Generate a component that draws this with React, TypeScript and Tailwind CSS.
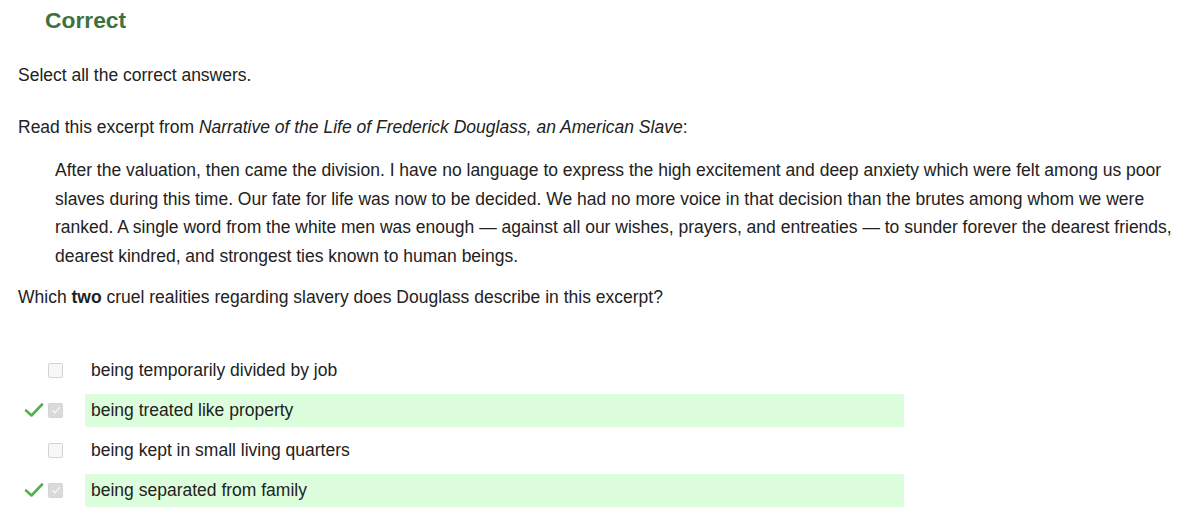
import React from "react";

function Check() {
  return (
    <svg width="20" height="16" viewBox="0 0 20 16" className="block">
      <path d="M2 8.5 L7.5 13.5 L18 2.5" fill="none" stroke="#52b152" strokeWidth="2.6" strokeLinecap="round" strokeLinejoin="round" />
    </svg>
  );
}

function Box({ checked }: { checked: boolean }) {
  return (
    <div className={`w-[15px] h-[15px] rounded-[2px] border border-[#d4d4d4] flex items-center justify-center ${checked ? "bg-[#dadada]" : "bg-[#f7f7f7]"}`}>
      {checked && (
        <svg width="12" height="12" viewBox="0 0 12 12">
          <path d="M2.5 6.2 L5 8.7 L9.8 3.2" fill="none" stroke="#f4f4f4" strokeWidth="1.6" />
        </svg>
      )}
    </div>
  );
}

const options = [
  { text: "being temporarily divided by job", correct: false },
  { text: "being treated like property", correct: true },
  { text: "being kept in small living quarters", correct: false },
  { text: "being separated from family", correct: true },
];

export default function App() {
  return (
    <div className="w-[1182px] h-[523px] bg-white overflow-hidden text-[#222] font-['Liberation_Sans',Arial,sans-serif] text-[17.5px]">
      <div className="pl-[45px] pt-[6px] h-[55px] text-[22.8px] font-bold text-[#3d723d] leading-[28px]">Correct</div>
      <div className="pl-[18px] leading-[24px] mt-[8px]">Select all the correct answers.</div>
      <div className="pl-[18px] leading-[24px] mt-[28px]">
        Read this excerpt from <i>Narrative of the Life of Frederick Douglass, an American Slave</i>:
      </div>
      <div className="pl-[55px] pr-[2px] leading-[28.7px] mt-[17px]">
        After the valuation, then came the division. I have no language to express the high excitement and deep anxiety which were felt among us poor slaves during this time. Our fate for life was now to be decided. We had no more voice in that decision than the brutes among whom we were ranked. A single word from the white men was enough — against all our wishes, prayers, and entreaties — to sunder forever the dearest friends, dearest kindred, and strongest ties known to human beings.
      </div>
      <div className="pl-[18px] leading-[24px] mt-[14px]">
        Which <b>two</b> cruel realities regarding slavery does Douglass describe in this excerpt?
      </div>
      <div className="mt-[45px] flex flex-col gap-[7px]">
        {options.map((o) => (
          <div key={o.text} className="flex items-center h-[33px]">
            <div className="w-[48px] flex justify-end pr-[4px]">{o.correct && <Check />}</div>
            <Box checked={o.correct} />
            <div className={`ml-[22px] w-[819px] h-[33px] flex items-center pl-[6px] ${o.correct ? "bg-[#dcfedc]" : ""}`}>{o.text}</div>
          </div>
        ))}
      </div>
    </div>
  );
}
